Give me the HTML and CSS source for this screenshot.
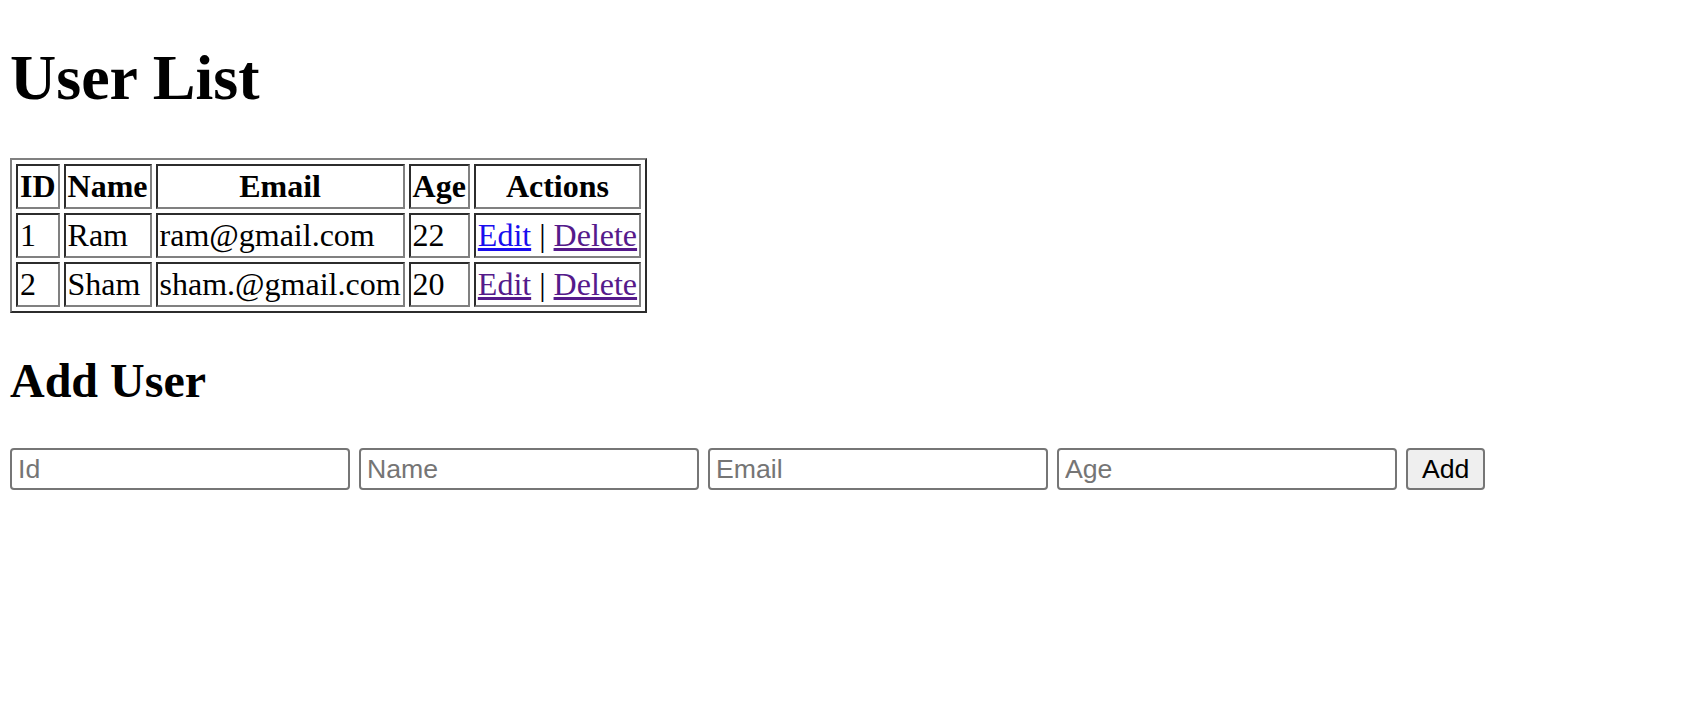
FILE: index.html
```html
<!DOCTYPE html>
<html>
<head>
<meta charset="utf-8">
<title>User List</title>
<link rel="stylesheet" href="styles.css">
</head>
<body>
<div class="app">
  <h1 class="title">User List</h1>
  <table class="users">
    <thead>
      <tr><th>ID</th><th>Name</th><th>Email</th><th>Age</th><th>Actions</th></tr>
    </thead>
    <tbody>
      <tr>
        <td>1</td><td>Ram</td><td>ram@gmail.com</td><td>22</td>
        <td><a href="#" class="link link-new">Edit</a> | <a href="#" class="link link-visited">Delete</a></td>
      </tr>
      <tr>
        <td>2</td><td>Sham</td><td>sham.@gmail.com</td><td>20</td>
        <td><a href="#" class="link link-visited">Edit</a> | <a href="#" class="link link-visited">Delete</a></td>
      </tr>
    </tbody>
  </table>
  <h2 class="subtitle">Add User</h2>
  <form class="add-form">
    <input class="field" type="text" placeholder="Id">
    <input class="field" type="text" placeholder="Name">
    <input class="field" type="text" placeholder="Email">
    <input class="field" type="text" placeholder="Age">
    <button class="btn" type="button">Add</button>
  </form>
</div>
</body>
</html>
```

FILE: styles.css
```css
html, body {
  background: #ffffff;
}
body {
  margin: 0;
  padding: 0 10px;
  font-family: "Liberation Serif", "Times New Roman", serif;
  font-size: 32px;
  color: #000000;
}
.app {
  padding-top: 0.1px;
}
.title {
  font-size: 64px;
  font-weight: bold;
  margin: 41px 0 43px;
}
.users {
  border: 2px outset #808080;
  border-spacing: 4px;
  border-collapse: separate;
}
.users th,
.users td {
  border: 2px inset #808080;
  padding: 2px;
}
.users th {
  font-weight: bold;
  text-align: center;
}
.users td {
  text-align: left;
}
.link {
  text-decoration: underline;
}
.link-new {
  color: #1a0dee;
}
.link-visited {
  color: #551a8b;
}
.subtitle {
  font-size: 48px;
  font-weight: bold;
  margin: 40px 0 40px;
}
.add-form {
  display: flex;
  gap: 9px;
  align-items: flex-start;
  margin: 0;
}
.field {
  box-sizing: border-box;
  width: 340px;
  height: 42px;
  margin: 0;
  padding: 2px 6px;
  border: 2px solid #767676;
  border-radius: 4px;
  font-family: "Liberation Sans", Arial, sans-serif;
  font-size: 26.67px;
  color: #000;
  background: #fff;
}
.field::placeholder {
  color: #757575;
}
.btn {
  box-sizing: border-box;
  height: 42px;
  margin: 0;
  padding: 2px 14px;
  border: 2px solid #767676;
  border-radius: 4px;
  background: #efefef;
  font-family: "Liberation Sans", Arial, sans-serif;
  font-size: 26.67px;
  color: #000;
}
```
